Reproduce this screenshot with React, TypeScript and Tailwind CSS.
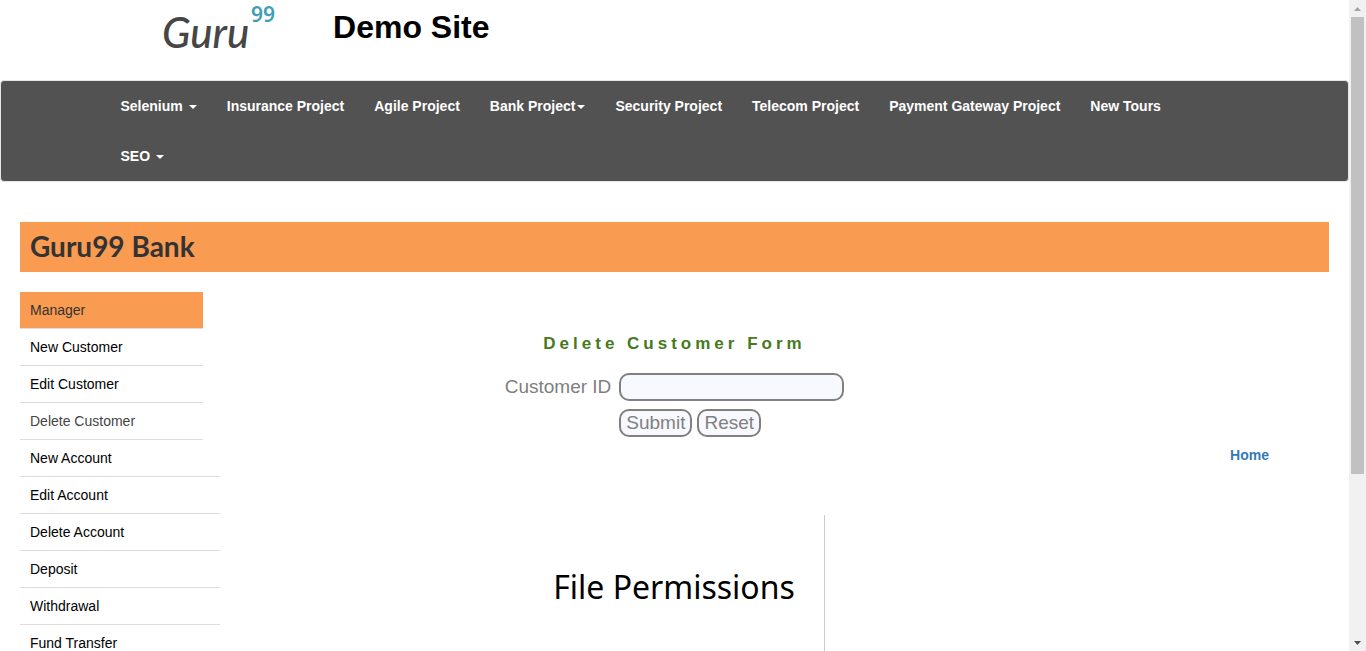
type NavItem = { label: string; caret?: "spaced" | "tight" };

const navItems: NavItem[] = [
  { label: "Selenium", caret: "spaced" },
  { label: "Insurance Project" },
  { label: "Agile Project" },
  { label: "Bank Project", caret: "tight" },
  { label: "Security Project" },
  { label: "Telecom Project" },
  { label: "Payment Gateway Project" },
  { label: "New Tours" },
  { label: "SEO", caret: "spaced" },
];

const customerLinks = ["Manager", "New Customer", "Edit Customer", "Delete Customer"];
const accountLinks = [
  "New Account",
  "Edit Account",
  "Delete Account",
  "Deposit",
  "Withdrawal",
  "Fund Transfer",
];

function Logo() {
  return (
    <a href="#" className="flex items-start font-['Lato',sans-serif]">
      <span className="w-[89px] pt-2 text-[42px] leading-[48px] font-medium italic text-[#464646]">Guru</span>
      <span className="font-['Noto_Sans',sans-serif] text-[21px] leading-[28px] font-semibold text-[#3f9fb5]">
        99
      </span>
    </a>
  );
}

function NavBar() {
  return (
    <nav className="rounded border border-[#e3e7e7] bg-[#525252]">
      <ul className="mx-auto flex max-w-[1170px] flex-wrap px-4">
        {navItems.map(({ label, caret }) => (
          <li key={label}>
            <a
              href="#"
              className="flex items-center px-[15px] py-[15px] text-sm leading-5 font-bold whitespace-nowrap text-white"
            >
              {label}
              {caret && (
                <svg
                  viewBox="0 0 8 4"
                  className={caret === "spaced" ? "mt-[2px] ml-[6px] h-1 w-2" : "mt-[2px] ml-[2px] h-1 w-2"}
                >
                  <path d="M0 0h8L4 4z" fill="currentColor" />
                </svg>
              )}
            </a>
          </li>
        ))}
      </ul>
    </nav>
  );
}

function itemTone(label: string) {
  if (label === "Manager") return "bg-[#f99b50] text-[#333333]";
  if (label === "Delete Customer") return "text-[#444444]";
  return "text-black";
}

function LinkList({ links, width }: { links: string[]; width: string }) {
  return (
    <ul className={width}>
      {links.map((label) => (
        <li key={label} className="border-b border-[#dddddd]">
          <a href="#" className={`block px-[10px] py-2 text-sm leading-5 ${itemTone(label)}`}>
            {label}
          </a>
        </li>
      ))}
    </ul>
  );
}

function DeleteForm() {
  return (
    <form className="flex flex-col items-center" onSubmit={(e) => e.preventDefault()}>
      <h2 className="text-[17px] leading-6 font-bold tracking-[4px] text-[#467a1c]">
        Delete Customer Form
      </h2>
      <div className="mt-[17px] grid grid-cols-[auto_auto] gap-2 text-[19px] leading-6 text-[#808080]">
        <label htmlFor="customer-id" className="self-center">
          Customer ID
        </label>
        <input
          id="customer-id"
          type="text"
          className="h-7 w-[225px] rounded-[10px] border-2 border-[#808080] bg-[#f8f8ff] px-[5px]"
        />
        <div className="col-start-2 flex gap-[5px]">
          <button type="submit" className="h-7 rounded-[10px] border-2 border-[#808080] bg-[#f8f8ff] px-[5px]">
            Submit
          </button>
          <button type="reset" className="h-7 rounded-[10px] border-2 border-[#808080] bg-[#f8f8ff] px-[5px]">
            Reset
          </button>
        </div>
      </div>
    </form>
  );
}

function ScrollBar() {
  return (
    <div aria-hidden="true" className="flex w-[17px] shrink-0 flex-col bg-[#f1f1f1] px-[2px]">
      <div className="flex h-[17px] shrink-0 items-center justify-center">
        <svg viewBox="0 0 7 4" className="h-1 w-[7px]">
          <path d="M0 4h7L3.500 0z" fill="#a3a3a3" />
        </svg>
      </div>
      <div className="flex-1">
        <div className="h-[74%] bg-[#c1c1c1]" />
      </div>
      <div className="flex h-[17px] shrink-0 items-center justify-center">
        <svg viewBox="0 0 7 4" className="h-1 w-[7px]">
          <path d="M0 0h7L3.500 4z" fill="#505050" />
        </svg>
      </div>
    </div>
  );
}

export default function App() {
  return (
    <div className="flex h-screen overflow-hidden bg-white font-['Liberation_Sans',Arial,sans-serif] text-sm text-black">
      <div className="min-w-0 flex-1">
        <header className="flex h-20 items-start pl-[162px]">
          <Logo />
          <h1 className="ml-[58px] pt-2 text-[32px] leading-[38px] font-bold">Demo Site</h1>
        </header>
        <NavBar />
        <div className="px-5 pt-10">
          <div className="bg-[#f99b50] px-[10px] pb-[2px] font-['Lato',sans-serif] text-[28px] leading-[48px] font-bold text-[#333333]">
            Guru99 Bank
          </div>
          <div className="mt-5 grid grid-cols-[200px_1fr_200px]">
            <aside>
              <LinkList links={customerLinks} width="w-[183px]" />
              <LinkList links={accountLinks} width="w-[200px]" />
            </aside>
            <main className="flex flex-col items-center pt-10">
              <DeleteForm />
              <section className="mt-[78px] flex h-[250px] w-[300px] justify-center border-r border-[#cccccc] pt-[48px] font-['Noto_Sans',sans-serif] text-[32px] leading-[48px] whitespace-nowrap">
                File Permissions
              </section>
            </main>
            <div className="flex items-start justify-end pt-[153px] pr-[60px]">
              <a href="#" className="leading-5 font-bold text-[#337ab7]">
                Home
              </a>
            </div>
          </div>
        </div>
      </div>
      <ScrollBar />
    </div>
  );
}
